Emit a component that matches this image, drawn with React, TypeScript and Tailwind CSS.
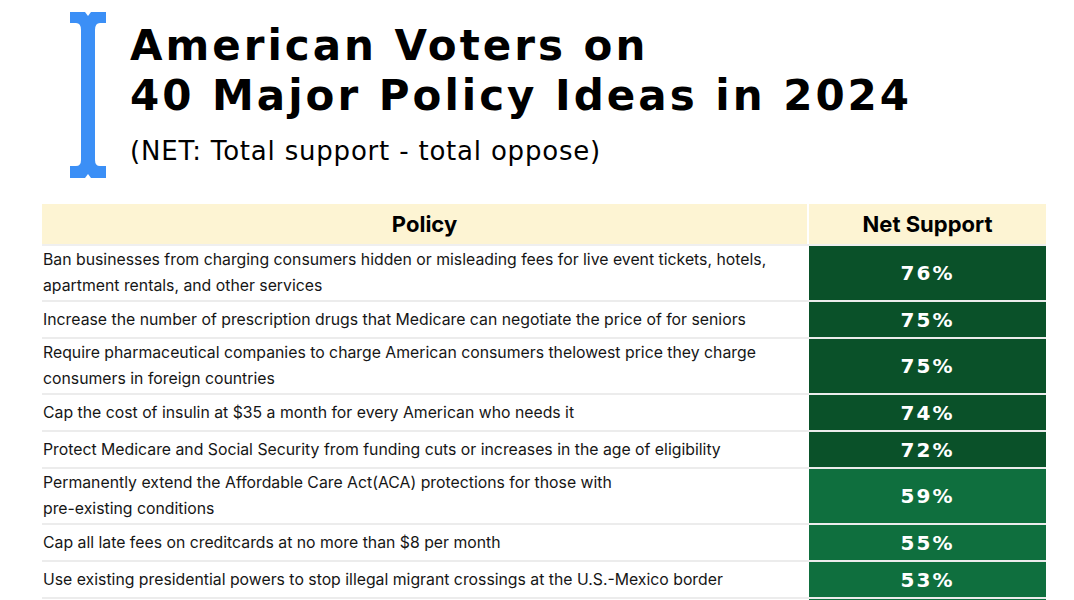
import React from "react";

type Row = { policy: string[]; net: string; tone: "dark" | "mid" };

const rows: Row[] = [
  {
    policy: [
      "Ban businesses from charging consumers hidden or misleading fees for live event tickets, hotels,",
      "apartment rentals, and other services",
    ],
    net: "76%",
    tone: "dark",
  },
  {
    policy: ["Increase the number of prescription drugs that Medicare can negotiate the price of for seniors"],
    net: "75%",
    tone: "dark",
  },
  {
    policy: [
      "Require pharmaceutical companies to charge American consumers thelowest price they charge",
      "consumers in foreign countries",
    ],
    net: "75%",
    tone: "dark",
  },
  {
    policy: ["Cap the cost of insulin at $35 a month for every American who needs it"],
    net: "74%",
    tone: "dark",
  },
  {
    policy: ["Protect Medicare and Social Security from funding cuts or increases in the age of eligibility"],
    net: "72%",
    tone: "dark",
  },
  {
    policy: [
      "Permanently extend the Affordable Care Act(ACA) protections for those with",
      "pre-existing conditions",
    ],
    net: "59%",
    tone: "mid",
  },
  {
    policy: ["Cap all late fees on creditcards at no more than $8 per month"],
    net: "55%",
    tone: "mid",
  },
  {
    policy: ["Use existing presidential powers to stop illegal migrant crossings at the U.S.-Mexico border"],
    net: "53%",
    tone: "mid",
  },
];

function IBeam() {
  return (
    <svg width="36" height="166" viewBox="0 0 36 166" className="flex-none">
      <path
        d="M0 0 H15 L18 4 L21 0 H36 V11 H30 Q25 11 25 18 V148 Q25 154 30 154 H36 V166 H21 L18 162 L15 166 H0 V154 H6 Q11 154 11 148 V18 Q11 11 6 11 H0 Z"
        fill="#3b8ff6"
      />
    </svg>
  );
}

export default function App() {
  return (
    <div className="min-h-screen bg-white pb-10">
      <div className="flex items-start pl-[70px] pt-[12px]">
        <IBeam />
        <div className="ml-[24px] mt-[9px]">
          <h1 className="font-['DejaVu_Sans',sans-serif] text-[42px] font-bold leading-[50px] tracking-[3px] text-black">
            American Voters on
            <br />
            40 Major Policy Ideas in 2024
          </h1>
          <p className="mt-[15px] font-['DejaVu_Sans',sans-serif] text-[26px] leading-[30px] tracking-[0.8px] text-black">
            (NET: Total support - total oppose)
          </p>
        </div>
      </div>

      <div className="mx-[42px] mt-[26px] w-[1004px] font-['Inter',sans-serif]">
        <div className="flex border-b-2 border-[#efefef]">
          <div className="flex h-[40px] w-[765px] items-center justify-center bg-[#fdf4d3] text-[22px] font-bold text-black">
            Policy
          </div>
          <div className="ml-[2px] flex h-[40px] w-[237px] items-center justify-center bg-[#fdf4d3] text-[22px] font-bold text-black">
            Net Support
          </div>
        </div>

        {rows.map((r) => (
          <div key={r.policy[0]} className="flex border-b-2 border-[#ececec]">
            <div className="flex min-h-[35px] w-[765px] flex-col justify-center py-px pl-px text-[15.8px] leading-[26px] text-[#161616]">
              {r.policy.map((line) => (
                <span key={line}>{line}</span>
              ))}
            </div>
            <div
              className={
                "ml-[2px] flex w-[237px] items-center justify-center font-['DejaVu_Sans',sans-serif] text-[20px] font-bold tracking-[2px] text-white " +
                (r.tone === "dark" ? "bg-[#0a5129]" : "bg-[#0f6f3e]")
              }
            >
              {r.net}
            </div>
          </div>
        ))}

        <div className="flex">
          <div className="h-[35px] w-[765px]" />
          <div className="ml-[2px] h-[35px] w-[237px] bg-[#0f6f3e]" />
        </div>
      </div>
    </div>
  );
}
